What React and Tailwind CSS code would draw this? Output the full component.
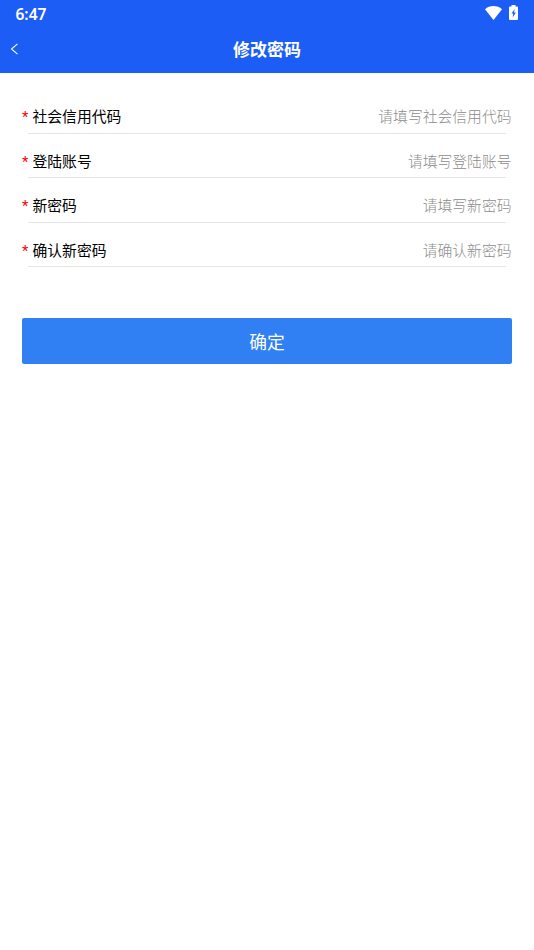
const rows = [
  { label: '社会信用代码', placeholder: '请填写社会信用代码', height: 'h-[45px]', inset: 'pb-px' },
  { label: '登陆账号', placeholder: '请填写登陆账号', height: 'h-11', inset: 'pb-0' },
  { label: '新密码', placeholder: '请填写新密码', height: 'h-[45px]', inset: 'pb-px' },
  { label: '确认新密码', placeholder: '请确认新密码', height: 'h-11', inset: 'pb-0' },
];

function StatusBar() {
  return (
    <div className="flex h-[25px] items-center justify-between pl-[15.500px] pr-4">
      <span className="pt-1 font-['Noto_Sans'] text-[15.500px] font-semibold leading-[25px]">6:47</span>
      <div className="flex items-center gap-[7px]">
        <svg className="mt-px h-[14px] w-[17px]" viewBox="0 0 17 14" fill="currentColor">
          <path d="M8.5 14 0 3.200C2.300 1.100 5.200 0 8.500 0s6.200 1.100 8.500 3.200Z" />
        </svg>
        <svg className="h-[15px] w-[9px]" viewBox="0 0 9 15" fill="currentColor" fillRule="evenodd">
          <path d="M2.500 0h4v1.500h1.500q1 0 1 1V14q0 1-1 1H1q-1 0-1-1V2.500q0-1 1-1h1.500ZM5.700 4 2.500 8.500h1.700L3.700 12.500 6.900 7.500H5Z" />
        </svg>
      </div>
    </div>
  );
}

export default function App() {
  return (
    <div className="min-h-[950px] w-full bg-white font-['Noto_Sans_CJK_SC',sans-serif] text-black">
      <header className="h-[72.500px] bg-[#1c5df6] text-white">
        <StatusBar />
        <div className="grid h-[48px] grid-cols-[40px_1fr_40px] items-center">
          <svg className="ml-[10px] h-3 w-[9px]" viewBox="0 0 9 12" fill="none" stroke="currentColor" strokeWidth="1.100">
            <path d="M7.500 0.800 1.500 6l6 5.200" />
          </svg>
          <h1 className="text-center text-[17px] font-bold leading-[48px]">修改密码</h1>
        </div>
      </header>
      <main className="px-[22px] pt-[16.500px]">
        {rows.map((row) => (
          <div key={row.label} className={`flex flex-col ${row.height}`}>
            <div className={`flex flex-1 items-end justify-between text-[14.800px] leading-[33px] ${row.inset}`}>
              <label className="flex h-[33px]">
                <span className="w-[10.500px] pt-0.5 font-['Roboto'] text-[14.800px] text-[#f00]">*</span>
                {row.label}
              </label>
              <span className="-mr-px pr-[1.500px] font-light text-[#8c8c8c]">{row.placeholder}</span>
            </div>
            <div className="mx-[6px] h-px bg-[#e5e5e5]" />
          </div>
        ))}
        <button className="mt-[51px] h-[46px] w-full rounded-[2px] bg-[#3080f3] text-[17.800px] leading-[46px] text-white">确定</button>
      </main>
    </div>
  );
}
